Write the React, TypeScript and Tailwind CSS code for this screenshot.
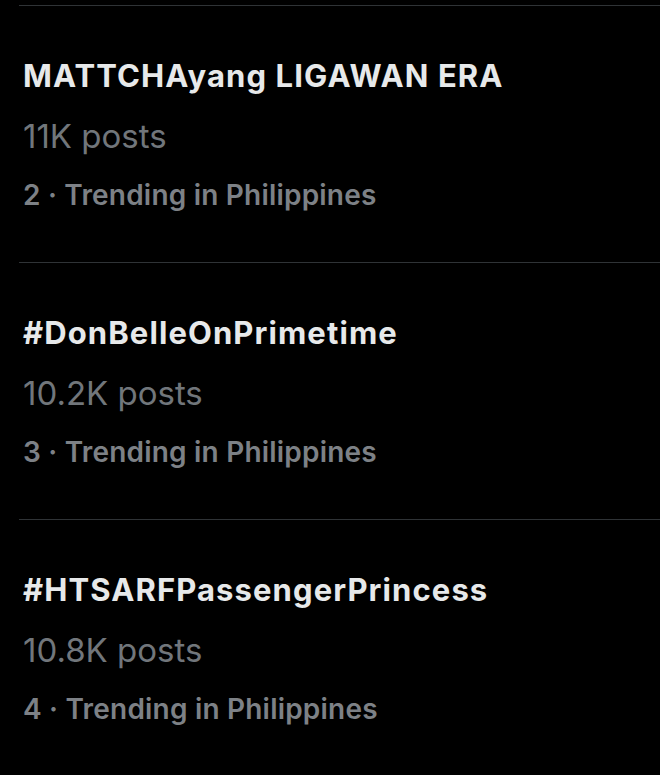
import React from 'react';

const trends = [
  { name: 'MATTCHAyang LIGAWAN ERA', posts: '11K posts', rank: 2 },
  { name: '#DonBelleOnPrimetime', posts: '10.2K posts', rank: 3 },
  { name: '#HTSARFPassengerPrincess', posts: '10.8K posts', rank: 4 },
];

const App = () => {
  return (
    <div className="min-h-[775px] w-[660px] bg-black pt-[5px] pl-[19px] font-['Inter',sans-serif]">
      {trends.map((t) => (
        <div key={t.rank} className="border-t border-[#2f3336] pt-[52px] pb-[51px] pl-[4px]">
          <div className="text-[31px] leading-[36px] font-bold tracking-[1.1px] text-[#e7e9ea]">{t.name}</div>
          <div className="mt-[22px] text-[33px] leading-[40px] text-[#71767b]">{t.posts}</div>
          <div className="mt-[23px] text-[28px] leading-[32px] font-semibold tracking-[0.2px] text-[#7d8186]">
            {t.rank} · Trending in Philippines
          </div>
        </div>
      ))}
    </div>
  );
};

export default App;
